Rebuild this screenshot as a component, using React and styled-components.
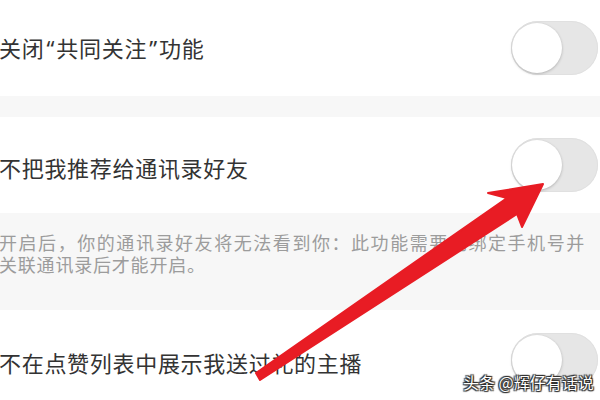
import React from 'react';
import styled, { createGlobalStyle } from 'styled-components';

const GlobalStyle = createGlobalStyle`
    html, body {
        margin: 0;
        padding: 0;
        background: #fff;
    }
    body {
        font-family: "Noto Sans CJK SC", "Noto Sans", sans-serif;
    }
`

const Screen = styled.div`
    position: relative;
    width: 600px;
    height: 400px;
    overflow: hidden;
    background: #fff;
    display: flex;
    flex-direction: column;
`

const Row = styled.div`
    display: flex;
    align-items: center;
    justify-content: space-between;
    height: ${props => props.height}px;
    flex-shrink: 0;
    padding-right: 2px;
    box-sizing: border-box;
    background: #fff;
`

const Label = styled.span`
    font-size: 22px;
    letter-spacing: 0.7px;
    color: #333;
    margin-left: -1px;
    margin-top: ${props => props.shift || 0}px;
`

const Quote = styled.span`
    font-family: "Noto Sans", sans-serif;
    letter-spacing: 0;
    margin: 0 2px;
`

const Gap = styled.div`
    height: ${props => props.height}px;
    flex-shrink: 0;
    background: #f7f7f7;
`

const Note = styled.div`
    flex-shrink: 0;
    height: 97px;
    background: #f7f7f7;
    padding-top: 18px;
    box-sizing: border-box;
`

const NoteLine = styled.div`
    width: 586px;
    font-size: 18px;
    line-height: 22px;
    letter-spacing: 0.8px;
    color: #9c9c9c;
    white-space: nowrap;
    text-align: ${props => (props.stretch ? 'justify' : 'left')};
    text-align-last: ${props => (props.stretch ? 'justify' : 'left')};
    margin-left: -1px;
`

const Track = styled.div`
    position: relative;
    width: 87px;
    height: 54px;
    border-radius: 27px;
    background: #e6e6e6;
    box-shadow: inset 0 0 0 1px #e0e0e0;
    flex-shrink: 0;
`

const Knob = styled.div`
    position: absolute;
    left: 1px;
    top: 2px;
    width: 50px;
    height: 50px;
    border-radius: 50%;
    background: #fff;
    box-shadow: 0 1px 3px rgba(0, 0, 0, 0.22), 0 0 0 1px #e4e4e4;
`

const Toggle = () => (
    <Track>
        <Knob />
    </Track>
)

const Arrow = styled.svg`
    position: absolute;
    left: 0;
    top: 0;
    pointer-events: none;
`

const Watermark = styled.div`
    position: absolute;
    left: 463px;
    top: 371px;
    font-size: 16px;
    line-height: 22px;
    color: #fff;
    white-space: nowrap;
    text-shadow: 0 0 1px #222, 0 0 1px #222, 1px 1px 1px #333, -1px -1px 1px #333, 1px -1px 1px #333, -1px 1px 1px #333;
`

export default function App() {
    return (
        <>
            <GlobalStyle />
            <Screen>
                <Row height={96}>
                    <Label shift={-2}>关闭<Quote>“</Quote>共同关注<Quote>”</Quote>功能</Label>
                    <Toggle />
                </Row>
                <Gap height={21} />
                <Row height={96}>
                    <Label shift={4}>不把我推荐给通讯录好友</Label>
                    <Toggle />
                </Row>
                <Note>
                    <NoteLine stretch>开启后，你的通讯录好友将无法看到你：此功能需要先绑定手机号并</NoteLine>
                    <NoteLine>关联通讯录后才能开启。</NoteLine>
                </Note>
                <Row height={100}>
                    <Label shift={4}>不在点赞列表中展示我送过礼的主播</Label>
                    <Toggle />
                </Row>
                <Arrow width="600" height="400" viewBox="0 0 600 400">
                    <polygon
                        points="256,373 507,198 488,193 543,184 522,227 517,214 260,380"
                        fill="#e81c24"
                        stroke="#e81c24"
                        strokeWidth="2"
                        strokeLinejoin="round"
                    />
                </Arrow>
                <Watermark>头条 @辉仔有话说</Watermark>
            </Screen>
        </>
    );
}
